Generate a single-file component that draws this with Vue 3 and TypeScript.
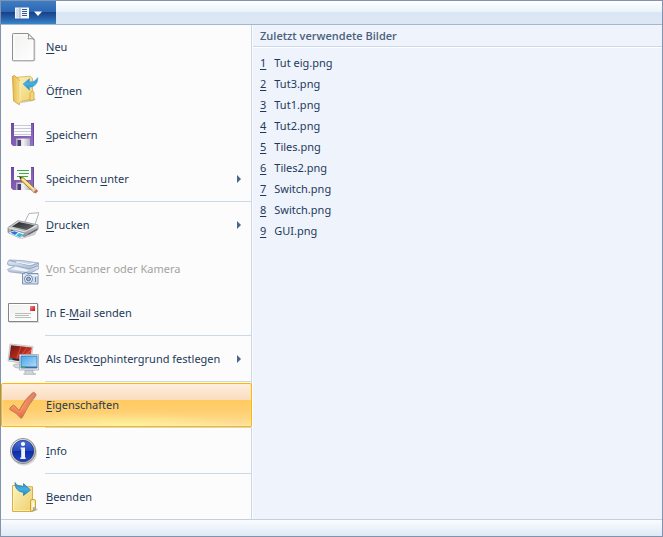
<script setup lang="ts">
type IconName =
  | 'new' | 'open' | 'save' | 'saveAs' | 'print' | 'scanner'
  | 'mail' | 'desktop' | 'check' | 'info' | 'exit'

interface MenuEntry {
  icon: IconName
  before: string
  key: string
  after: string
  submenu?: boolean
  disabled?: boolean
  active?: boolean
}

const groups: MenuEntry[][] = [
  [
    { icon: 'new', before: '', key: 'N', after: 'eu' },
    { icon: 'open', before: 'Ö', key: 'f', after: 'fnen' },
    { icon: 'save', before: '', key: 'S', after: 'peichern' },
    { icon: 'saveAs', before: 'Speichern ', key: 'u', after: 'nter', submenu: true },
  ],
  [
    { icon: 'print', before: '', key: 'D', after: 'rucken', submenu: true },
    { icon: 'scanner', before: '', key: 'V', after: 'on Scanner oder Kamera', disabled: true },
    { icon: 'mail', before: 'In E-', key: 'M', after: 'ail senden' },
  ],
  [{ icon: 'desktop', before: 'Als Deskt', key: 'o', after: 'phintergrund festlegen', submenu: true }],
  [{ icon: 'check', before: '', key: 'E', after: 'igenschaften', active: true }],
  [{ icon: 'info', before: '', key: 'I', after: 'nfo' }],
  [{ icon: 'exit', before: '', key: 'B', after: 'eenden' }],
]

const recent: string[] = [
  'Tut eig.png', 'Tut3.png', 'Tut1.png', 'Tut2.png', 'Tiles.png',
  'Tiles2.png', 'Switch.png', 'Switch.png', 'GUI.png',
]
</script>

<template>
  <div class="window">
    <svg class="defs" width="0" height="0" aria-hidden="true">
      <defs>
        <linearGradient id="gPage" x1="0" y1="0" x2="1" y2="1">
          <stop offset="0" stop-color="#f1f1f0" /><stop offset="1" stop-color="#ffffff" />
        </linearGradient>
        <linearGradient id="gFolder" x1="0" y1="0" x2="1" y2="1">
          <stop offset="0" stop-color="#fcf3c0" /><stop offset="1" stop-color="#efd06a" />
        </linearGradient>
        <linearGradient id="gFlap" x1="0" y1="0" x2="1" y2="0">
          <stop offset="0" stop-color="#e5b84a" /><stop offset="1" stop-color="#f8df86" />
        </linearGradient>
        <linearGradient id="gArrow" x1="0" y1="0" x2="0" y2="1">
          <stop offset="0" stop-color="#2b87bd" /><stop offset="0.5" stop-color="#43b1e8" /><stop offset="1" stop-color="#1f83c4" />
        </linearGradient>
        <linearGradient id="gDisk" x1="0" y1="0" x2="1" y2="1">
          <stop offset="0" stop-color="#6c4aa0" /><stop offset="1" stop-color="#9871c8" />
        </linearGradient>
        <linearGradient id="gShutter" x1="0" y1="0" x2="1" y2="0">
          <stop offset="0" stop-color="#a9a9b4" /><stop offset="0.5" stop-color="#f4f4f6" /><stop offset="1" stop-color="#b4b2c0" />
        </linearGradient>
        <linearGradient id="gPrinter" x1="0" y1="0" x2="0" y2="1">
          <stop offset="0" stop-color="#e4e6e7" /><stop offset="1" stop-color="#878d92" />
        </linearGradient>
        <linearGradient id="gTray" x1="0" y1="0" x2="1" y2="1">
          <stop offset="0" stop-color="#232527" /><stop offset="1" stop-color="#6b6e70" />
        </linearGradient>
        <linearGradient id="gScan" x1="0" y1="0" x2="0" y2="1">
          <stop offset="0" stop-color="#e7eef8" /><stop offset="1" stop-color="#a4b5cf" />
        </linearGradient>
        <linearGradient id="gStamp" x1="0" y1="0" x2="1" y2="1">
          <stop offset="0" stop-color="#f0908c" /><stop offset="1" stop-color="#c90d12" />
        </linearGradient>
        <linearGradient id="gRed" x1="0" y1="0" x2="1" y2="1">
          <stop offset="0" stop-color="#641812" /><stop offset="0.5" stop-color="#b82a1c" /><stop offset="1" stop-color="#f06a50" />
        </linearGradient>
        <linearGradient id="gBlue" x1="0" y1="0" x2="1" y2="1">
          <stop offset="0" stop-color="#4aa0e8" /><stop offset="1" stop-color="#b4e2fc" />
        </linearGradient>
        <linearGradient id="gCheck" x1="0" y1="0" x2="0" y2="1">
          <stop offset="0" stop-color="#d9805c" /><stop offset="0.6" stop-color="#f58958" /><stop offset="1" stop-color="#e96a42" />
        </linearGradient>
        <linearGradient id="gInfo" x1="0" y1="0" x2="0" y2="1">
          <stop offset="0" stop-color="#4a70d8" /><stop offset="0.48" stop-color="#2449bd" /><stop offset="0.5" stop-color="#0d2ca4" /><stop offset="1" stop-color="#2148c8" />
        </linearGradient>
        <linearGradient id="gRing" x1="0" y1="0" x2="1" y2="1">
          <stop offset="0" stop-color="#f0f0f0" /><stop offset="1" stop-color="#a8a8a8" />
        </linearGradient>
      </defs>
    </svg>

    <header class="bar">
      <button class="app-button" type="button" aria-label="Menü">
        <svg width="28" height="12" viewBox="0 0 28 12" aria-hidden="true">
          <path d="M0 .5h14v11H0z" fill="#f4f7fc" />
          <path d="M1 1.500h3.500v9H1z" fill="#d6dce8" />
          <path d="M5 .5v11" stroke="#8c9cbd" />
          <path d="M7 2.500h5M7 4.500h5M7 6.500h5M7 8.500h5" stroke="#37578f" />
          <path d="M19 4.500h8l-4 4.500z" fill="#fff" />
        </svg>
      </button>
    </header>

    <main class="body">
      <nav class="menu">
        <div v-for="(group, g) in groups" :key="g" class="group">
          <button
            v-for="item in group"
            :key="item.icon"
            type="button"
            class="item"
            :class="{ active: item.active }"
            :disabled="item.disabled"
          >
            <svg class="icon" width="32" height="32" viewBox="0 0 32 32" aria-hidden="true">
              <g v-if="item.icon === 'new'">
                <path d="M6 3.500h16.500l6 6V30H6z" fill="#000" opacity=".12" />
                <path d="M6.500 2.500h14.500l6 6v20.500a.8.8 0 0 1-.8.8H6.300a.8.8 0 0 1-.8-.8V3.300a.8.8 0 0 1 .8-.8z" fill="url(#gPage)" stroke="#8e8e8e" />
                <path d="M7 4h13.500M7 4v24.300h18.800V9" fill="none" stroke="#fff" />
                <path d="M21 2.500c.8 1.600.8 3.500 0 5.500 2-.6 4.300-.4 6 .5z" fill="#fff" stroke="#8e8e8e" />
              </g>
              <g v-else-if="item.icon === 'open'">
                <path d="M9 29l17-3 3-1.500-3-2z" fill="#000" opacity=".2" />
                <path d="M8 2.500l15-1.300 2.500 2V24l-14 3z" fill="url(#gFolder)" stroke="#d7ad49" stroke-width=".8" />
                <path d="M23 18.500l2-2.500 2 1v7.500l-4 1.300z" fill="#f4d779" stroke="#d4a53b" stroke-width=".8" />
                <path d="M5.400 1.300l2-.8 5 4.300v25L6.600 26z" fill="url(#gFlap)" stroke="#d0a03a" stroke-width=".8" />
                <path d="M12.800 6v21.500" stroke="#fff5c0" />
                <path d="M16 9l6.500-5.500v3.300c4 .5 6.500-1.500 8.200-4.300.6 5.500-2.700 9.500-8.200 9.800v3z" fill="url(#gArrow)" stroke="#5aa6cf" stroke-width=".6" />
              </g>
              <g v-else-if="item.icon === 'save' || item.icon === 'saveAs'">
                <path d="M4 4h23v23H6l-2-2z" fill="url(#gDisk)" />
                <path d="M4.500 4.500h22v22" fill="none" stroke="#56348a" opacity=".6" />
                <path d="M7 4h17v13H7z" fill="#fbfbfd" />
                <path v-if="item.icon === 'save'" d="M7 6.500h17M7 9.500h17M7 12.500h17M7 15.500h17" stroke="#c9cbd4" />
                <path v-else d="M10 7.500h12M12 10.500h10M10 13.500h11" stroke="#3eae3b" stroke-width="1.200" />
                <path d="M9 19.500h14V27H9z" fill="url(#gShutter)" />
                <path d="M10.500 21h3.500v6h-3.500z" fill="#533b7c" />
                <g v-if="item.icon === 'saveAs'">
                  <path d="M12.500 13.500l1.500 4 13 12 2.500-2.600L16.500 14.800z" fill="#efcb61" stroke="#896222" stroke-width=".7" />
                  <path d="M15.500 16.200l12 10.700" stroke="#fff1a5" stroke-width="1.200" />
                  <path d="M12.500 13.500l.9 2.700 1.500-1.500z" fill="#222" />
                  <path d="M25.200 27.800l2.700-3 1.500 1.400-2.700 3z" fill="#cfd2d5" />
                  <path d="M26.700 29.200l2.700-3 1.700 1.700-2.300 2.600z" fill="#d96350" />
                </g>
              </g>
              <g v-else-if="item.icon === 'print'">
                <path d="M2 25l13 4 16-9-3 6-13 4z" fill="#000" opacity=".18" />
                <path d="M17 14.500L22 4.500l10-.8-4.500 13z" fill="#fdfdfe" stroke="#9da0a6" stroke-width=".8" />
                <path d="M1 18.500l10-6.800 20 4.200v4.500L17.500 27.500 1 23.500z" fill="url(#gPrinter)" stroke="#71767b" stroke-width=".7" />
                <path d="M5 17.500l7-4.600 15.500 3.400-6.700 5z" fill="url(#gTray)" />
                <path d="M1.500 18.700l16 4 13-6.500" fill="none" stroke="#eceff1" />
                <path d="M4.500 20.800l11.500 3v2.700L4 23.500z" fill="#34383b" />
                <path d="M1 23.500l6.500-2.300 10 3-4.500 5z" fill="#f5f9fd" stroke="#8e9aa6" stroke-width=".6" />
                <path d="M3.500 23.500l4-1.200 3.500 1.200-3 2.500z" fill="#2475dc" />
                <path d="M9 26.500l3-2.600 4 1.300-3 3z" fill="#35b9e8" />
                <path d="M21 25.500l9-5.200" stroke="#5d6267" stroke-width="1.200" />
              </g>
              <g v-else-if="item.icon === 'scanner'">
                <path d="M.5 10l1-2.500 22 5L31.500 10v2l-8 4.500L1 12z" fill="url(#gScan)" stroke="#8497b5" stroke-width=".7" />
                <path d="M2.500 7l13 .5 16 2.500-8 3z" fill="#cbd7e8" stroke="#8fa0bb" stroke-width=".7" />
                <path d="M9 9l13 2.500 5-1.200" fill="none" stroke="#f5f9fd" />
                <path d="M.5 16.500l8-3.700 14 3.200 9-3.200v3.200l-10 5.200L2 18.800z" fill="url(#gScan)" stroke="#8a9cba" stroke-width=".7" />
                <path d="M4 16.300l5-2.300 13 3.200-3 1.500z" fill="#eff4fa" />
                <path d="M15.500 20.500h2v-1h3v1h10.500v10.500H15.500z" fill="#d1ddee" stroke="#7e94b6" />
                <path d="M16 22.500h15" stroke="#f4f8fd" />
                <circle cx="21.500" cy="26" r="4" fill="#f0f5fb" stroke="#748aaa" />
                <circle cx="21.500" cy="26" r="2" fill="#a0b4cf" stroke="#576f94" />
                <path d="M28.500 24v5" stroke="#7187a8" />
              </g>
              <g v-else-if="item.icon === 'mail'">
                <path d="M2 7h30v19H2z" fill="#000" opacity=".12" />
                <path d="M1.500 6.500h29v18h-29z" fill="url(#gPage)" stroke="#858585" />
                <path d="M2.500 7.500h27v16h-27z" fill="none" stroke="#fff" />
                <path d="M23 9h5v5h-5z" fill="url(#gStamp)" />
                <path d="M8 16.500h16M8 18.500h14M8 20.500h16" stroke="#bcbcbc" />
              </g>
              <g v-else-if="item.icon === 'desktop'">
                <path d="M6 22.500c2-2.200 8-2.200 10 .5 1 2-8 3.500-10-.5z" fill="#d5d8dc" stroke="#9c9fa4" stroke-width=".6" />
                <path d="M3 1l23 2.500-2.500 18L1 18z" fill="#e0e1e4" stroke="#b7b9bd" stroke-width=".7" />
                <path d="M4 2.200l20.800 2.300-2 15L2.200 16.600z" fill="url(#gRed)" />
                <path d="M14 3.500L9 17.500M20 4L11 17.700M24 7L12 17.500" stroke="#f79683" stroke-width=".7" opacity=".55" />
                <path d="M2.500 14.700l20.500 2.500-.3 2.300L2.200 16.600z" fill="#232d35" />
                <path d="M2.500 15l3 .4-.2 1.500-3-.4z" fill="#3ab1dc" />
                <path d="M18 27h8v3l3 1c-4 1.200-11 1-12.500 0l1.500-1z" fill="#cfd3d8" stroke="#96999f" stroke-width=".5" />
                <path d="M12.500 11.500h19v15.500h-19z" fill="#eef0f3" stroke="#a3a7ad" stroke-width=".8" />
                <path d="M14 13h16v12H14z" fill="url(#gBlue)" stroke="#2974bd" stroke-width=".8" />
                <path d="M14 23.500h16v1.500H14z" fill="#3c6a9c" />
                <path d="M14 23.500h4v1.500h-4z" fill="#34b069" />
              </g>
              <g v-else-if="item.icon === 'check'">
                <path d="M3 19l2.700-2.500q1-.6 1.800.2l4.500 4.700q6-11.500 13.700-17.700 1-.8 2 .2l1 1.200q.7.900-.2 1.900-7.500 9-13.300 21.500-.8 1.300-1.900.3Q9.500 23.500 3.200 20.800q-1-.8-.2-1.800z" fill="url(#gCheck)" stroke="#b77b5b" stroke-width="1" />
                <path d="M4.500 19.500l2-1.800 5.700 6Q19 12 26.700 5" fill="none" stroke="#ffb38d" stroke-width=".8" opacity=".4" />
              </g>
              <g v-else-if="item.icon === 'info'">
                <ellipse cx="17" cy="18" rx="13" ry="12.500" fill="#000" opacity=".15" />
                <circle cx="16" cy="16" r="12.600" fill="url(#gRing)" stroke="#808080" stroke-width=".8" />
                <circle cx="16" cy="16" r="10.700" fill="url(#gInfo)" stroke="#142d7b" stroke-width=".7" />
                <circle cx="16" cy="9" r="2.100" fill="#fff" />
                <path d="M13.500 12.500H18v10h.7V24h-5.400v-1.500h.9v-8.700h-.7z" fill="#f0f2f7" />
              </g>
              <g v-else>
                <path d="M24 29.500l6-2 .5 1.500-5 2z" fill="#000" opacity=".25" />
                <path d="M5.500 4.500h9l1 1.200h10v24.800h-20z" fill="url(#gFolder)" stroke="#dcae42" />
                <path d="M6.500 6v23.500h18" fill="none" stroke="#fff6c9" opacity=".7" />
                <path d="M23.500 30.500V20q0-1.500 1.500-1.500h2q1.500 0 1.500 1.500v8.500z" fill="#f8e6a7" stroke="#d3a23b" />
                <path d="M25.500 27.500v-6h1.500v5z" fill="#fff" />
                <path d="M26 26h1.700v3l-1.700.5z" fill="#5a92cb" opacity=".7" />
                <path d="M8 1.500c1.500 3 4.500 4.300 8.500 3.700V2.500L23.500 9l-7 5.500v-3.200C11 11 7.700 7 8 1.500z" fill="url(#gArrow)" stroke="#277ba9" stroke-width=".7" />
              </g>
            </svg>
            <span class="label">{{ item.before }}<u>{{ item.key }}</u>{{ item.after }}</span>
            <svg v-if="item.submenu" class="chevron" width="4" height="8" viewBox="0 0 4 8" aria-hidden="true">
              <path d="M0 0l4 4-4 4z" fill="#496588" />
            </svg>
          </button>
        </div>
      </nav>

      <section class="recent">
        <h2>Zuletzt verwendete Bilder</h2>
        <ol>
          <li v-for="(file, i) in recent" :key="i">
            <a href="#"><u>{{ i + 1 }}</u><span>{{ file }}</span></a>
          </li>
        </ol>
      </section>
    </main>

    <footer class="footer"></footer>
  </div>
</template>

<style>
body {
  margin: 0;
}
</style>

<style scoped>
.window {
  box-sizing: border-box;
  display: flex;
  flex-direction: column;
  min-height: 100vh;
  border: 1px solid #8393ad;
  background: #fcfcfc;
  color: #1e395b;
  font-family: "Noto Sans", "Open Sans", sans-serif;
  font-size: 11px;
  line-height: 16px;
}
.defs {
  position: absolute;
}
.bar {
  display: flex;
  height: 23px;
  border-bottom: 1px solid #a5b6d0;
  background: linear-gradient(#fdfeff 0, #eaf2fb 11px, #dae6f4 11px, #dce7f5 100%);
}
.app-button {
  display: flex;
  align-items: center;
  justify-content: center;
  width: 55px;
  height: 23px;
  padding: 0;
  border: 0;
  background: linear-gradient(#3d7dc4 0, #2c67b2 11px, #173f88 11px, #2765ad 18px, #3a87cb 100%);
}
.body {
  display: flex;
  flex: 1;
}
.menu {
  flex: none;
  width: 250px;
  border-right: 1px solid #cbd7e6;
}
.group + .group {
  padding-top: 2px;
  background: linear-gradient(#cdd8e6 0 1px, transparent 1px) no-repeat 44px 0;
}
.item {
  box-sizing: border-box;
  display: flex;
  align-items: center;
  gap: 6px;
  width: 100%;
  height: 44px;
  padding: 0 10px 0 6px;
  border: 1px solid transparent;
  border-width: 1px 0;
  background: none;
  color: inherit;
  font: inherit;
  text-align: left;
}
.item:disabled {
  color: #a3a3a3;
}
.item.active {
  position: relative;
  width: 251px;
  padding: 0 10px 0 5px;
  border: 1px solid #ffb700;
  border-radius: 2px;
  background:
    radial-gradient(ellipse at 50% 100%, rgba(255, 250, 155, 0.7), rgba(255, 240, 150, 0) 65%) no-repeat 0 100% / 100% 14px,
    linear-gradient(#feeee0 0, #fbdcbc 16px, #ffca61 16px, #ffce6d 26px, #ffe09a 100%);
  box-shadow: inset 0 0 2px #fff3c4;
}
.icon {
  flex: none;
}
.label {
  flex: 1;
  padding-left: 1px;
  white-space: nowrap;
}
u {
  text-underline-offset: 2px;
}
.chevron {
  flex: none;
}
.recent {
  flex: 1;
  margin-left: 1px;
  background: #eff4fc;
}
h2 {
  margin: 0;
  padding: 3px 7px 2px;
  border-bottom: 1px solid #cbd7ea;
  box-shadow: 0 1px #fff;
  color: #4c607a;
  font-family: "Open Sans", "Noto Sans", sans-serif;
  font-size: 11px;
  font-weight: 600;
  line-height: 16px;
}
ol {
  margin: 0;
  padding: 5px 0 0;
  list-style: none;
}
.recent a {
  display: flex;
  gap: 8px;
  padding: 0 7px;
  color: inherit;
  line-height: 21px;
  text-decoration: none;
}
.footer {
  height: 16px;
  border-top: 1px solid #c3d0e2;
  background: linear-gradient(#fafcff, #e0e9f6);
}
</style>
